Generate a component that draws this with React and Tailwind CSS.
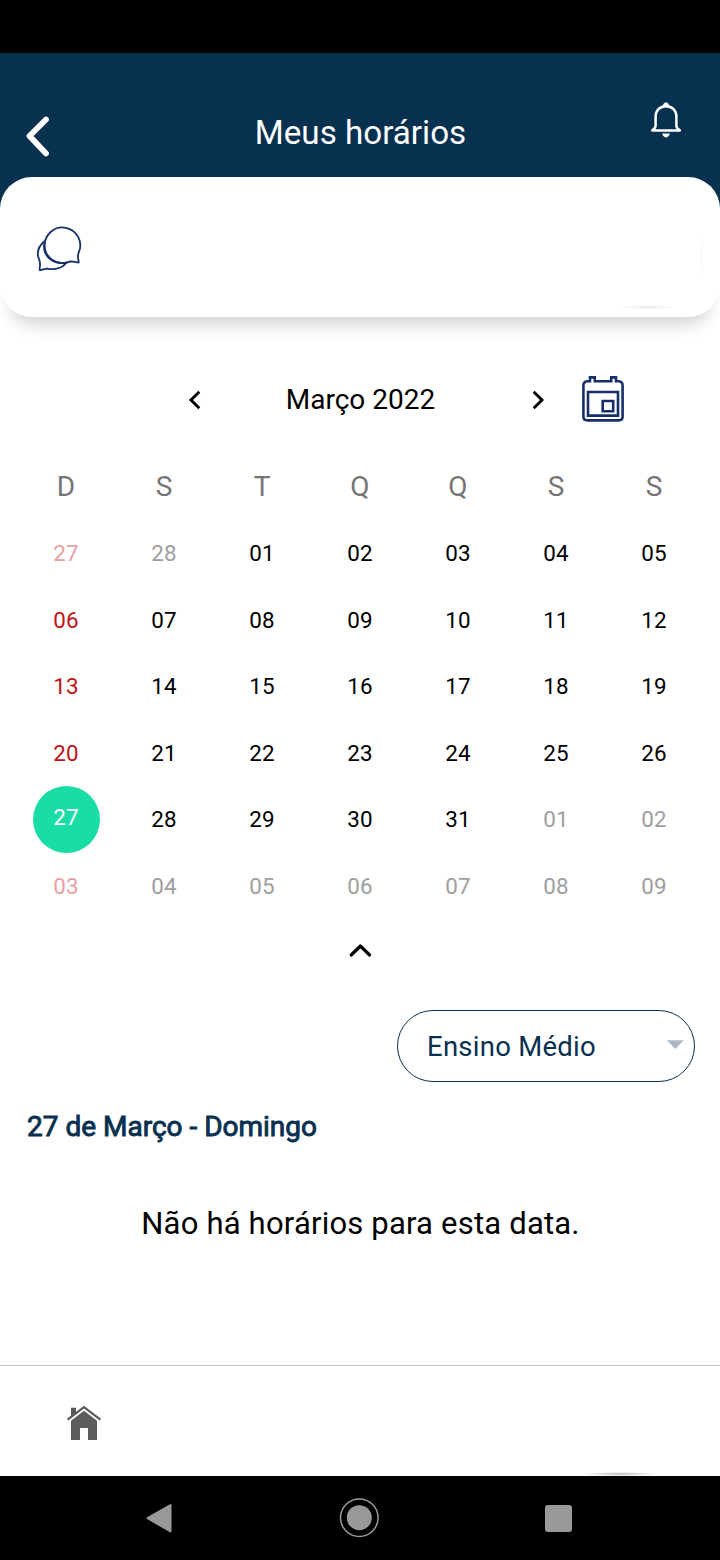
import { useState } from "react";
import clsx from "clsx";

const weekDays = ["D", "S", "T", "Q", "Q", "S", "S"];

// 27/02 -> 09/04
const firstDay = new Date(2022, 1, 27);
const days = Array.from({ length: 42 }, (_, i) => {
  const d = new Date(firstDay);
  d.setDate(firstDay.getDate() + i);
  return d;
});

function BellIcon() {
  return (
    <svg width="32" height="38" viewBox="0 0 32 38" fill="none">
      <path
        d="M16 5.2C9.8 5.2 5.6 9.6 5.6 15.4V24.5C5.6 26.6 4.4 28 2.2 29.4H29.8C27.6 28 26.4 26.6 26.4 24.5V15.4C26.4 9.6 22.2 5.2 16 5.2Z"
        stroke="white"
        strokeWidth="2.5"
        strokeLinejoin="round"
      />
      <path d="M12.2 5.6L13.6 2.8Q16 -0.4 18.4 2.8L19.8 5.6Z" fill="white" />
      <path d="M12.2 32.6H19.8C19.4 35 17.8 36.4 16 36.4S12.6 35 12.2 32.6Z" fill="white" />
    </svg>
  );
}

function ChatIcon() {
  return (
    <svg width="46" height="46" viewBox="0 0 46 46" fill="none" stroke="#16306a" strokeWidth="1.8" strokeLinejoin="round" strokeLinecap="round">
      <path d="M42.6 26.8A17.8 17.8 0 1 0 32 36.2C35 34.4 38.4 36.2 42.7 36.6C43 34 40.7 31.4 42.6 26.8Z" />
      <path d="M8.6 15.2C2.6 20 0.2 27 3.4 34.4C4.8 37.8 3.6 40.7 3.6 44C6.2 44.4 8.1 42.6 11.2 42.6C19.2 44.2 26.6 42 30.4 36.6" />
      <path d="M8.4 17.2C6 28.6 16 39.6 31 36.6" />
    </svg>
  );
}

function CalendarIcon() {
  return (
    <svg width="42" height="46" viewBox="0 0 42 46" fill="none" stroke="#172f69" strokeWidth="2.6">
      <path d="M12.8 5.3V1.4H8V5.3H5.2Q1.4 5.8 1.4 9.5V40.5Q1.4 44.4 5.4 44.4H36.6Q40.6 44.4 40.6 40.5V9.5Q40.6 5.8 36.8 5.3H34V1.4H29.2V5.3Z" />
      <path d="M6 16H36V39.6H6Z" />
      <path d="M20.7 25H31.2V35.3H20.7Z" />
    </svg>
  );
}

function HomeIcon() {
  return (
    <svg width="36" height="36" viewBox="0 0 36 36" fill="#5c5c5c">
      <path d="M5 2.8H10V8.4L5 12.4Z" />
      <path d="M1.6 14.6L18 2.2L34.4 14.6" fill="none" stroke="#5c5c5c" strokeWidth="2.3" />
      <path d="M5 15.8L18 5.8L31 15.8V35H22V23H14V35H5Z" />
    </svg>
  );
}

export default function App() {
  const [selected, setSelected] = useState(new Date(2022, 2, 27).getTime());

  return (
    <div className="w-[720px] h-[1560px] flex flex-col bg-white overflow-hidden font-['Roboto',sans-serif] text-black">

      {/* STATUS BAR */}
      <div className="h-[53px] shrink-0 bg-black" />

      {/* HEADER */}
      <header className="h-[155px] shrink-0 bg-[#08304f] flex items-start justify-between pl-[25px] pr-[38px]">
        <button className="mt-[62px] w-8">
          <svg width="26" height="42" viewBox="0 0 26 42" fill="none">
            <path d="M21 4.5L4.5 21L21 38.5" stroke="white" strokeWidth="5.8" strokeLinecap="round" strokeLinejoin="round" />
          </svg>
        </button>
        <h1 className="mt-[60px] ml-[14px] text-[33.2px] leading-10 text-white">Meus horários</h1>
        <button className="mt-[48px]">
          <BellIcon />
        </button>
      </header>

      {/* CARD */}
      <div className="relative h-[140px] -mt-[31px] shrink-0 rounded-[32px] bg-white shadow-[0_18px_16px_-10px_rgba(0,0,0,0.17)] pl-9 pt-[49px]">
        <ChatIcon />
        <div className="absolute right-[16px] top-[52px] w-[4px] h-[52px] bg-[radial-gradient(closest-side,#f6f6f6,#ffffff)]" />
        <div className="absolute left-[618px] top-[129px] w-[58px] h-[4px] bg-[radial-gradient(ellipse_at_top,#e6e6e6,#ffffff_70%)]" />
      </div>

      {/* MONTH */}
      <div className="h-[60px] mt-[53px] shrink-0 flex items-center pl-[188px] pr-24">
        <button>
          <svg width="13" height="20" viewBox="0 0 13 20" fill="none">
            <path d="M11.3 1.7L3 10L11.3 18.3" stroke="black" strokeWidth="2.9" />
          </svg>
        </button>
        <span className="flex-1 pr-3 text-center text-[28px]">Março 2022</span>
        <button>
          <svg width="13" height="20" viewBox="0 0 13 20" fill="none">
            <path d="M1.7 1.7L10 10L1.7 18.3" stroke="black" strokeWidth="2.9" />
          </svg>
        </button>
        <button className="ml-[37px] -mt-0.5">
          <CalendarIcon />
        </button>
      </div>

      {/* CALENDAR */}
      <div className="shrink-0 px-[17px] mt-[31px]">
        <div className="grid grid-cols-7 h-[59px] text-[28px] leading-[52px] text-center text-[#757575]">
          {weekDays.map((w, i) => (
            <span key={i}>{w}</span>
          ))}
        </div>

        <div className="grid grid-cols-7 auto-rows-[66.6px] text-[22.4px] tracking-[0.2px]">
          {days.map((d) => {
            const isSelected = d.getTime() === selected;
            const inMonth = d.getMonth() === 2;
            const sunday = d.getDay() === 0;
            return (
              <div key={d.getTime()} className="flex items-center justify-center">
                <button
                  onClick={() => setSelected(d.getTime())}
                  className={clsx(
                    "w-[67px] h-[67px] shrink-0 rounded-full",
                    isSelected ? "bg-[#19dda5] text-white pb-1" : "pt-px",
                    !isSelected && inMonth && !sunday && "text-black",
                    !isSelected && inMonth && sunday && "text-[#c11218]",
                    !isSelected && !inMonth && !sunday && "text-[#9e9e9e]",
                    !isSelected && !inMonth && sunday && "text-[#e8a0a3]"
                  )}
                >
                  {String(d.getDate()).padStart(2, "0")}
                </button>
              </div>
            );
          })}
        </div>
      </div>

      <button className="self-center shrink-0 mt-[21px]">
        <svg width="24" height="18" viewBox="0 0 24 18" fill="none">
          <path d="M3.2 14L12.4 5L21.6 14" stroke="black" strokeWidth="3.2" strokeLinecap="round" strokeLinejoin="round" />
        </svg>
      </button>

      {/* SELECT */}
      <div className="self-end shrink-0 mt-[51px] mr-[25px] w-[298px] h-[72px] rounded-full border border-[#08304f] flex items-center justify-between pl-[29px] pr-[10px] text-[#08304f]">
        <span className="pt-0.5 text-[27.5px] tracking-[0.25px]">Ensino Médio</span>
        <svg width="18" height="9" viewBox="0 0 18 9" className="-mt-[3px]">
          <path d="M0.8 0.3H17.8L9.3 9Z" fill="#adbac5" />
        </svg>
      </div>

      <h2 className="shrink-0 mt-[25px] ml-[27px] text-[28px] leading-10 text-[#08304f] [-webkit-text-stroke:0.9px]">
        27 de Março - Domingo
      </h2>

      <p className="shrink-0 mt-[57px] pl-px text-center text-[31px] leading-10 tracking-[0.2px]">
        Não há horários para esta data.
      </p>

      {/* TAB BAR */}
      <nav className="relative mt-auto h-[111px] shrink-0 border-t border-[#c8c8c8] pl-[66px] pt-[39px]">
        <HomeIcon />
        <div className="absolute left-[582px] bottom-0 w-[76px] h-[4px] bg-[radial-gradient(ellipse_at_center,#b8b8b8,#ffffff_70%)]" />
      </nav>

      {/* ANDROID NAV */}
      <div className="h-[84px] shrink-0 bg-black flex items-center justify-between pl-[146px] pr-[148px]">
        <svg width="26" height="30" viewBox="0 0 26 30">
          <path d="M24.5 2V28.5L1.5 15.2Z" fill="#999999" stroke="#999999" strokeWidth="2" strokeLinejoin="round" />
        </svg>
        <svg width="40" height="40" viewBox="0 0 40 40">
          <circle cx="20.3" cy="19.7" r="18.8" fill="none" stroke="#999999" strokeWidth="1.5" />
          <circle cx="20.3" cy="19.7" r="12.5" fill="#999999" />
        </svg>
        <div className="w-[27px] h-[27px] rounded-[3px] bg-[#999999]" />
      </div>
    </div>
  );
}
